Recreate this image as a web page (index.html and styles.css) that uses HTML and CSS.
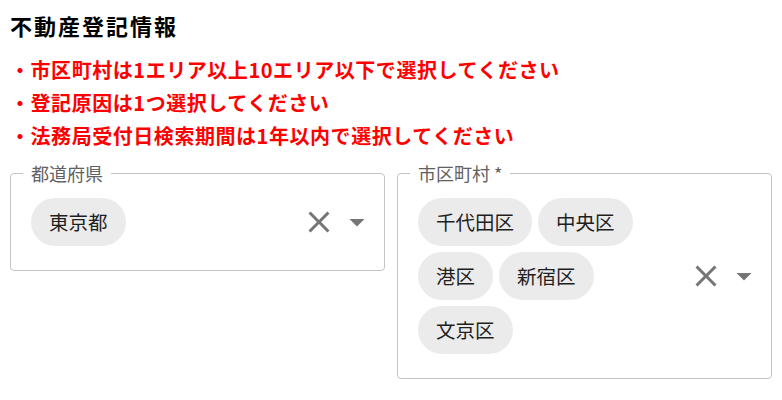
FILE: index.html
```html
<!DOCTYPE html>
<html lang="ja">
<head>
    <meta charset="UTF-8">
    <title>不動産登記情報</title>
    <link rel="stylesheet" href="styles.css">
</head>
<body>
    <div id="page">
        <h1 class="title">不動産登記情報</h1>
        <ul class="errors">
            <li>・市区町村は1エリア以上10エリア以下で選択してください</li>
            <li>・登記原因は1つ選択してください</li>
            <li>・法務局受付日検索期間は1年以内で選択してください</li>
        </ul>
        <div class="fields">
            <fieldset class="field">
                <legend>都道府県</legend>
                <div class="field-body">
                    <div class="chips">
                        <span class="chip">東京都</span>
                    </div>
                    <div class="actions">
                        <svg class="icon-clear" viewBox="0 0 24 24"><path d="M19 6.41 17.59 5 12 10.59 6.41 5 5 6.41 10.59 12 5 17.59 6.41 19 12 13.41 17.59 19 19 17.59 13.41 12z"/></svg>
                        <svg class="icon-arrow" viewBox="0 0 24 24"><path d="M7 10l5 5 5-5z"/></svg>
                    </div>
                </div>
            </fieldset>
            <fieldset class="field">
                <legend>市区町村 *</legend>
                <div class="field-body">
                    <div class="chips">
                        <span class="chip">千代田区</span>
                        <span class="chip">中央区</span>
                        <span class="chip">港区</span>
                        <span class="chip">新宿区</span>
                        <span class="chip">文京区</span>
                    </div>
                    <div class="actions">
                        <svg class="icon-clear" viewBox="0 0 24 24"><path d="M19 6.41 17.59 5 12 10.59 6.41 5 5 6.41 10.59 12 5 17.59 6.41 19 12 13.41 17.59 19 19 17.59 13.41 12z"/></svg>
                        <svg class="icon-arrow" viewBox="0 0 24 24"><path d="M7 10l5 5 5-5z"/></svg>
                    </div>
                </div>
            </fieldset>
        </div>
    </div>
</body>
</html>
```
FILE: styles.css
```css
*{
    margin: 0;
    padding: 0;
    box-sizing: border-box;
}
body{
    font-family: "Noto Sans CJK JP", "Noto Sans", sans-serif;
    color: #000;
    background: #fff;
}
ul{
    list-style: none;
}
#page{
    padding: 10px 10px 0;
}
.title{
    font-size: 22px;
    line-height: 30px;
    font-weight: bold;
    letter-spacing: 2px;
}
.errors{
    margin-top: 13px;
}
.errors li{
    color: #ff0000;
    font-size: 20px;
    font-weight: bold;
    line-height: 33px;
    letter-spacing: 0.55px;
}
.fields{
    display: flex;
    gap: 12px;
    align-items: flex-start;
    margin-top: 11px;
}
.field{
    flex: 1;
    border: 1px solid #c4c4c4;
    border-radius: 4px;
    padding: 0 9px 24px 20px;
}
.field legend{
    margin-left: -8px;
    padding: 0 8px;
    font-size: 18px;
    line-height: 20px;
    color: #616161;
}
.field-body{
    display: flex;
    align-items: center;
    margin-top: 15px;
}
.chips{
    flex: 1;
    display: flex;
    flex-wrap: wrap;
    gap: 6px;
    margin-right: 14px;
}
.chip{
    height: 48px;
    line-height: 48px;
    padding: 0 18px;
    border-radius: 24px;
    background: #ebebeb;
    font-size: 19.5px;
    color: #1f1f1f;
}
.actions{
    display: flex;
    align-items: center;
    gap: 2px;
}
.icon-clear,
.icon-arrow{
    width: 36px;
    height: 36px;
    fill: #757575;
}
```
